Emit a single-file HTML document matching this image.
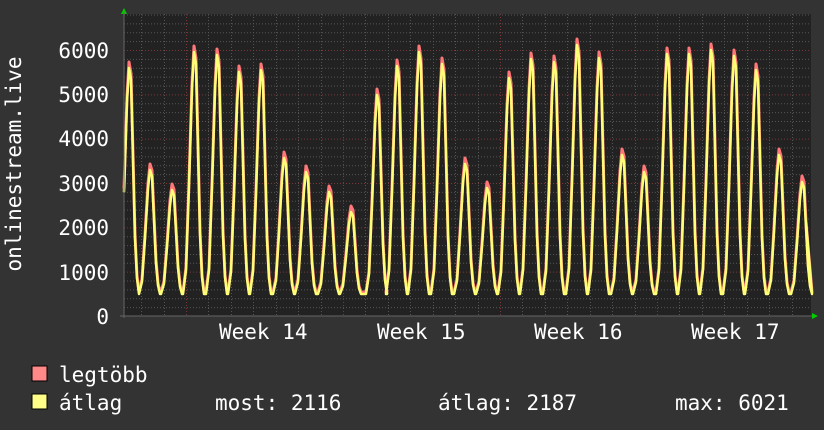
<!DOCTYPE html><html><head><style>
body{margin:0;background:#333;width:824px;height:430px;overflow:hidden;font-family:"DejaVu Sans Mono","Liberation Mono",monospace;color:#fff}
svg{position:absolute;left:0;top:0}
text{font-family:"DejaVu Sans Mono","Liberation Mono",monospace;fill:#fff;font-size:21px}
</style></head><body>
<svg width="824" height="430" id="s">
<rect x="124" y="14" width="687" height="302" fill="#222"/>
<g id="grid"></g>
<g id="data"></g>
<polygon points="121,14 127,14 124,8" fill="#0c0"/>
<polygon points="812,313 812,319 818,316" fill="#0c0"/>
<line x1="124" y1="12" x2="124" y2="318" stroke="#666"/>
<line x1="120" y1="316" x2="812" y2="316" stroke="#666"/>
<g text-anchor="end">
<text x="109" y="58">6000</text><text x="109" y="102">5000</text><text x="109" y="146">4000</text>
<text x="109" y="191">3000</text><text x="109" y="235">2000</text><text x="109" y="280">1000</text>
<text x="109" y="324">0</text></g>
<g>
<text x="219" y="339">Week 14</text><text x="377" y="339">Week 15</text>
<text x="534" y="339">Week 16</text><text x="691" y="339">Week 17</text></g>
<text transform="translate(21,164) rotate(-90)" text-anchor="middle">onlinestream.live</text>
<rect x="32" y="366" width="15" height="15" fill="#f88" stroke="#000"/>
<rect x="32" y="394" width="15" height="15" fill="#ff8" stroke="#000"/>
<text x="59" y="382">legtöbb</text>
<text x="59" y="410">átlag</text>
<text x="215" y="410">most: 2116</text>
<text x="438" y="410">átlag: 2187</text>
<text x="675" y="410">max: 6021</text>
</svg>
<script>
var ns="http://www.w3.org/2000/svg",g=document.getElementById('grid'),d=document.getElementById('data');
function L(x1,y1,x2,y2,c,da){var l=document.createElementNS(ns,'line');l.setAttribute('x1',x1);l.setAttribute('y1',y1);l.setAttribute('x2',x2);l.setAttribute('y2',y2);l.setAttribute('stroke',c);if(da)l.setAttribute('stroke-dasharray',da);g.appendChild(l);}
for(var v=200;v<=6800;v+=200){var y=316-v*0.04433;if(y<14)break;L(124,y+.5,811,y+.5,v%1000?'#555':'#7a3a3a','1,2');}
for(var x=186-22.43*2;x<811;x+=22.43){var k=Math.round((x-186)/22.43);L(Math.round(x)+.5,14,Math.round(x)+.5,316,(k%7==0)?'#7a3a3a':'#555','1,2');}
var P=[[130,68],[151,170],[173,190],[195,52],[218,55],[240,72],[262,70],[285,158],[307,172],[330,192],[352,212],[378,95],[398,66],[420,52],[443,64],[466,164],[488,188],[510,78],[532,59],[555,62],[578,45],[600,58],[623,155],[645,172],[668,54],[690,54],[712,50],[735,56],[757,70],[780,155],[803,182]];
function path(off,c,w){var s='';var t=294+(off<0?-2:0);
for(var i=0;i<P.length;i++){var px=P[i][0],py=P[i][1]+off,h=t-py;
var pts=[[px-12,t],[px-9,t-0.1*h],[px-6,t-0.45*h],[px-3,t-0.85*h],[px-1,t-h],[px+1,t-0.95*h],[px+3,t-0.6*h],[px+5,t-0.25*h],[px+7,t-0.07*h],[px+9,t]];
for(var j=0;j<pts.length;j++){if(pts[j][0]<124)continue;s+=(s?'L':'M')+pts[j][0]+','+pts[j][1].toFixed(1)+' ';}}
s+='L806,222';var p=document.createElementNS(ns,'path');p.setAttribute('d',s);p.setAttribute('fill','none');p.setAttribute('stroke',c);p.setAttribute('stroke-width',w);p.setAttribute('stroke-linejoin','round');d.appendChild(p);}
path(-6,'#f77',3);path(0,'#ff7',2.5);
</script>
</body></html>
